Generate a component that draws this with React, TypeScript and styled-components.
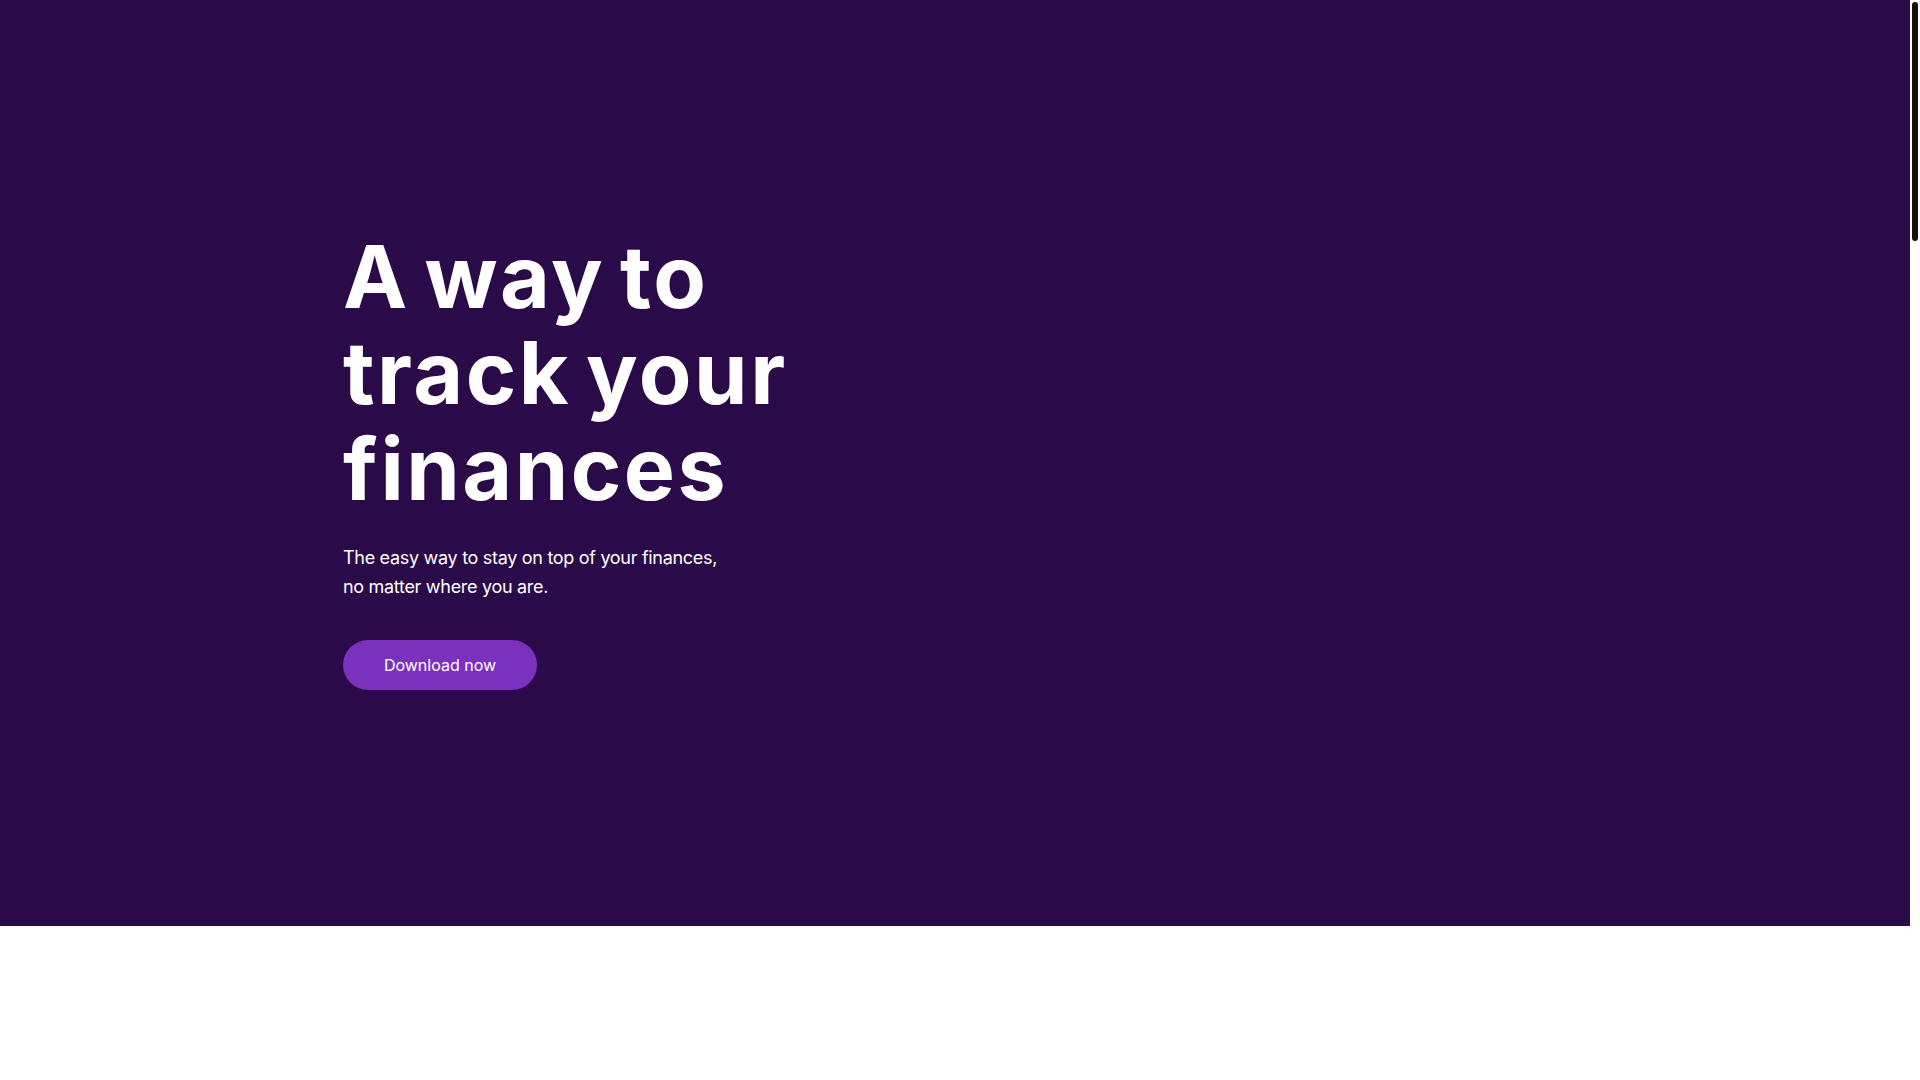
import React from "react";
import styled, { createGlobalStyle } from "styled-components";

const GlobalStyle = createGlobalStyle`
  html, body { margin: 0; padding: 0; }
  body {
    background: #ffffff;
    font-family: Inter, "Liberation Sans", sans-serif;
    -webkit-font-smoothing: antialiased;
  }
`;

const Page = styled.div`
  display: flex;
  height: 1080px;
  overflow: hidden;
`;

const Main = styled.main`
  flex: 1;
  display: flex;
  flex-direction: column;
`;

const ScrollGutter = styled.div`
  width: 10px;
  background: #ffffff;
  padding: 2px 2px 0;
  box-sizing: border-box;
`;

const ScrollThumb = styled.div`
  width: 6px;
  height: 239px;
  border-radius: 3px;
  background: #111111;
`;

const Hero = styled.section`
  background: #2a0a48;
  height: 926px;
  display: flex;
  align-items: flex-start;
`;

const Container = styled.div`
  width: 1224px;
  margin: 0 auto;
  padding-top: 229px;
  box-sizing: border-box;
`;

const Title = styled.h1`
  margin: 0;
  color: #ffffff;
  font-family: Inter, "Liberation Sans", sans-serif;
  font-weight: 700;
  font-size: 86px;
  line-height: 96px;
  letter-spacing: 2.5px;
  word-spacing: -8px;
  max-width: 560px;
`;

const Lead = styled.p`
  margin: 26px 0 0;
  color: #ffffff;
  font-size: 18px;
  line-height: 29px;
  letter-spacing: -0.3px;
  max-width: 400px;
`;

const DownloadButton = styled.button`
  margin-top: 39px;
  width: 194px;
  height: 50px;
  border: none;
  border-radius: 25px;
  background: #7a32be;
  color: #ffffff;
  font-family: Inter, "Liberation Sans", sans-serif;
  font-size: 16px;
  cursor: pointer;
`;

const Below = styled.section`
  background: #ffffff;
  flex: 1;
`;

export default function App() {
  return (
    <>
      <GlobalStyle />
      <Page>
        <Main>
          <Hero>
            <Container>
              <Title>A way to track your finances</Title>
              <Lead>
                The easy way to stay on top of your finances,
                <br />
                no matter where you are.
              </Lead>
              <DownloadButton>Download now</DownloadButton>
            </Container>
          </Hero>
          <Below />
        </Main>
        <ScrollGutter>
          <ScrollThumb />
        </ScrollGutter>
      </Page>
    </>
  );
}
